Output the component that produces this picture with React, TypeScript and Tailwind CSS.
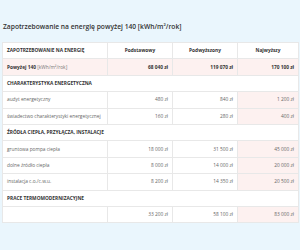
const sectionRows = [
  {
    title: "CHARAKTERYSTYKA ENERGETYCZNA",
    rows: [
      ["audyt energetyczny", "480 zł", "840 zł", "1 200 zł"],
      ["świadectwo charakterystyki energetycznej", "160 zł", "280 zł", "400 zł"],
    ],
  },
  {
    title: "ŹRÓDŁA CIEPŁA, PRZYŁĄCZA, INSTALACJE",
    rows: [
      ["gruntowa pompa ciepła", "18 000 zł", "31 500 zł", "45 000 zł"],
      ["dolne źródło ciepła", "8 000 zł", "14 000 zł", "20 000 zł"],
      ["instalacja c.o./c.w.u.", "8 200 zł", "14 350 zł", "20 500 zł"],
    ],
  },
  {
    title: "PRACE TERMOMODERNIZACYJNE",
    rows: [["", "33 200 zł", "58 100 zł", "83 000 zł"]],
  },
];

const cell = "h-[16.4px] whitespace-nowrap border border-[#e8e8e8] px-[4px] align-middle";

export default function App() {
  return (
    <div className="h-[250px] w-[300px] overflow-hidden bg-[#eaf6fd] font-['Open_Sans',sans-serif] text-[#666]">
      <div className="px-[3px] pt-[22px] pb-[10px] text-[6.7px] font-semibold leading-[10px] text-[#333]">
        Zapotrzebowanie na energię powyżej 140 [kWh/m²/rok]
      </div>
      <table className="mx-[2px] w-[296px] table-fixed border-collapse bg-white text-[4.8px] leading-[7px]">
        <colgroup>
          <col className="w-[105px]" />
          <col className="w-[65px]" />
          <col className="w-[65px]" />
          <col className="w-[61px]" />
        </colgroup>
        <thead>
          <tr className="font-bold text-[#333]">
            <th className={`${cell} text-left`}>ZAPOTRZEBOWANIE NA ENERGIĘ</th>
            <th className={`${cell} text-center`}>Podstawowy</th>
            <th className={`${cell} text-center`}>Podwyższony</th>
            <th className={`${cell} text-center`}>Najwyższy</th>
          </tr>
        </thead>
        <tbody>
          <tr className="bg-[#fdf1f0] text-[#333]">
            <td className={cell}>
              <span className="font-bold">Powyżej 140</span>{" "}
              <span className="text-[#777]">[kWh/m²/rok]</span>
            </td>
            <td className={`${cell} text-right font-bold`}>68 040 zł</td>
            <td className={`${cell} text-right font-bold`}>119 070 zł</td>
            <td className={`${cell} text-right font-bold`}>170 100 zł</td>
          </tr>
          {sectionRows.map((s) => (
            <>
              <tr key={s.title}>
                <td colSpan={4} className={`${cell} font-bold text-[#333]`}>
                  {s.title}
                </td>
              </tr>
              {s.rows.map((r, i) => (
                <tr key={s.title + i}>
                  <td className={cell}>{r[0]}</td>
                  <td className={`${cell} text-right`}>{r[1]}</td>
                  <td className={`${cell} text-right`}>{r[2]}</td>
                  <td className={`${cell} bg-[#fdf1f0] text-right`}>{r[3]}</td>
                </tr>
              ))}
            </>
          ))}
        </tbody>
      </table>
    </div>
  );
}
